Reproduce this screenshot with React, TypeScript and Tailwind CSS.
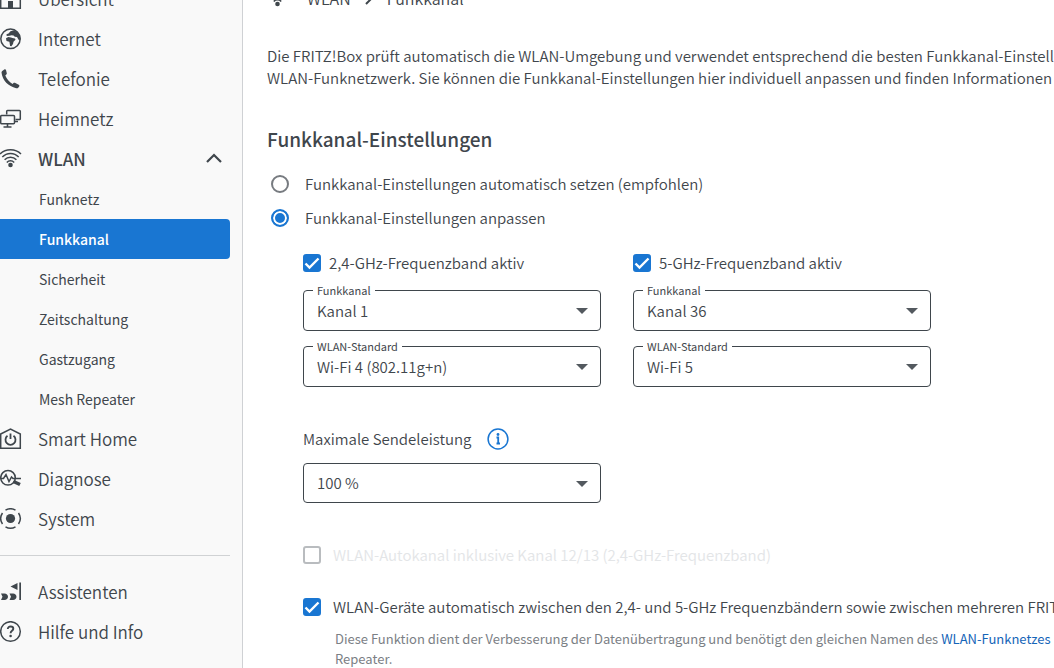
import { useState } from "react";
import type { ReactNode } from "react";
import clsx from "clsx";

export default function App() {
  const [mode, setMode] = useState("custom");

  return (
    <div className="flex h-screen overflow-hidden bg-white font-['Noto_Sans_CJK_SC','Noto_Sans',sans-serif] text-[15px] font-[350] text-[#3f464c]">
      <Sidebar />

      <main className="min-w-0 flex-1 overflow-hidden pl-6">
        {/* Breadcrumb */}
        <nav className="-mt-[22px] flex h-10 items-center text-base" aria-label="Pfad">
          <span className="flex w-10 shrink-0">
            <WlanIcon />
          </span>
          <a href="#wlan">WLAN</a>
          <svg className="mx-2 size-5" viewBox="0 0 20 20" fill="none" stroke="currentColor" strokeWidth="2">
            <path d="M7 4l6 6-6 6" />
          </svg>
          <span>Funkkanal</span>
        </nav>

        <p className="mt-[27px] leading-[22px] whitespace-nowrap">
          Die FRITZ!Box prüft automatisch die WLAN-Umgebung und verwendet entsprechend die besten Funkkanal-Einstellungen für Ihr
          <br />
          WLAN-Funknetzwerk. Sie können die Funkkanal-Einstellungen hier individuell anpassen und finden Informationen zur
        </p>

        <h1 className="mt-9 text-[19px] leading-7 font-medium">Funkkanal-Einstellungen</h1>

        {/* Mode selection */}
        <div className="mt-3.5 flex flex-col">
          <Radio
            label="Funkkanal-Einstellungen automatisch setzen (empfohlen)"
            checked={mode === "auto"}
            onChange={() => setMode("auto")}
          />
          <Radio
            label="Funkkanal-Einstellungen anpassen"
            checked={mode === "custom"}
            onChange={() => setMode("custom")}
          />
        </div>

        <div className="pl-9">
          {/* Frequency bands */}
          <div className="mt-4 flex gap-8">
            <Band
              id="band24"
              title="2,4-GHz-Frequenzband aktiv"
              channel="Kanal 1"
              standard="Wi-Fi 4 (802.11g+n)"
            />
            <Band id="band5" title="5-GHz-Frequenzband aktiv" channel="Kanal 36" standard="Wi-Fi 5" />
          </div>

          {/* Transmit power */}
          <div className="mt-10 flex h-6 items-center">
            <label htmlFor="power">Maximale Sendeleistung</label>
            <button type="button" aria-label="Information" className="ml-4 text-[#1976d2]">
              <InfoIcon />
            </button>
          </div>
          <div className="mt-3 w-[298px]">
            <SelectBox id="power" value="100 %" />
          </div>

          <div className="mt-10">
            <Checkbox wide disabled label="WLAN-Autokanal inklusive Kanal 12/13 (2,4-GHz-Frequenzband)" />
          </div>
          <div className="mt-7">
            <Checkbox
              wide
              defaultChecked
              label="WLAN-Geräte automatisch zwischen den 2,4- und 5-GHz Frequenzbändern sowie zwischen mehreren FRITZ!Box"
            />
          </div>
          <p className="mt-2.5 pl-8 text-[13px] leading-5 font-normal whitespace-nowrap text-[#7b8085]">
            Diese Funktion dient der Verbesserung der Datenübertragung und benötigt den gleichen Namen des{" "}
            <a href="#funknetz" className="text-[#1565b8]">
              WLAN-Funknetzes
            </a>
            <br />
            Repeater.
          </p>
        </div>
      </main>
    </div>
  );
}

/* Sidebar */

const subItems = ["Funknetz", "Funkkanal", "Sicherheit", "Zeitschaltung", "Gastzugang", "Mesh Repeater"];

function Sidebar() {
  return (
    <aside className="w-[243px] shrink-0 border-r border-[#cfd1d4] bg-[#f9f9f9] pr-3">
      <nav className="-mt-[21px]" aria-label="Hauptmenü">
        <NavItem icon={<HomeIcon />} label="Übersicht" />
        <NavItem icon={<GlobeIcon />} label="Internet" />
        <NavItem icon={<PhoneIcon />} label="Telefonie" />
        <NavItem icon={<NetworkIcon />} label="Heimnetz" />
        <button type="button" aria-expanded="true" className="flex h-10 w-full items-center pr-2 text-[17px] leading-6 font-medium">
          <span className="w-[38px] shrink-0">
            <WlanIcon />
          </span>
          <span className="flex-1 text-left">WLAN</span>
          <svg className="h-4 w-4" viewBox="0 0 16 16" fill="none" stroke="currentColor" strokeWidth="2.2">
            <path d="M1 11l7-7 7 7" />
          </svg>
        </button>
        {subItems.map((item) => (
          <a
            key={item}
            href="#wlan"
            className={clsx(
              "flex h-10 items-center rounded-r pl-[39px] text-sm",
              item === "Funkkanal" ? "bg-[#1976d2] font-medium text-white" : "font-normal"
            )}
          >
            {item}
          </a>
        ))}
        <NavItem icon={<SmartHomeIcon />} label="Smart Home" />
        <NavItem icon={<DiagnoseIcon />} label="Diagnose" />
        <NavItem icon={<SystemIcon />} label="System" />
        <hr className="my-4 border-[#d0d2d4]" />
        <NavItem icon={<AssistantIcon />} label="Assistenten" />
        <NavItem icon={<HelpIcon />} label="Hilfe und Info" />
      </nav>
    </aside>
  );
}

function NavItem({ icon, label }: { icon: ReactNode; label: string }) {
  return (
    <a href="#menu" className="flex h-10 items-center text-[17px] leading-6">
      <span className="w-[38px] shrink-0">{icon}</span>
      {label}
    </a>
  );
}

/* Form controls */

function Radio({ label, checked, onChange }: { label: string; checked: boolean; onChange: () => void }) {
  return (
    <label className="flex h-[34px] items-center gap-4 pl-1">
      <input
        type="radio"
        name="mode"
        checked={checked}
        onChange={onChange}
        className="size-[18px] shrink-0 appearance-none rounded-full border-2 border-[#777b80] bg-white checked:border-[#1976d2] checked:bg-[#1976d2] checked:shadow-[inset_0_0_0_2px_white]"
      />
      {label}
    </label>
  );
}

function Checkbox({
  label,
  wide,
  disabled,
  defaultChecked,
}: {
  label: string;
  wide?: boolean;
  disabled?: boolean;
  defaultChecked?: boolean;
}) {
  return (
    <label className={clsx("flex h-6 items-center whitespace-nowrap", wide ? "gap-3" : "gap-2", disabled && "text-[#e3e5e7]")}>
      <span className="grid shrink-0">
        <input
          type="checkbox"
          disabled={disabled}
          defaultChecked={defaultChecked}
          className="peer col-start-1 row-start-1 size-[18px] appearance-none rounded-[3px] border-2 border-[#53595f] bg-white checked:border-[#1976d2] checked:bg-[#1976d2] disabled:border-[#b9bcbf]"
        />
        <svg
          className="pointer-events-none invisible col-start-1 row-start-1 size-[18px] peer-checked:visible"
          viewBox="0 0 18 18"
          fill="none"
          stroke="white"
          strokeWidth="2.4"
        >
          <path d="M2.5 9.5l4 4 9-9" />
        </svg>
      </span>
      {label}
    </label>
  );
}

function SelectBox({ id, label, value }: { id: string; label?: string; value: string }) {
  return (
    <div className="relative">
      {label && (
        <label htmlFor={id} className="absolute -top-2 left-2.5 bg-white px-1 text-[11px] leading-4 font-normal">
          {label}
        </label>
      )}
      <select
        id={id}
        defaultValue={value}
        className={clsx(
          "block w-full appearance-none rounded border border-[#3f464c] bg-transparent px-[13px] leading-6",
          label ? "h-[41px]" : "h-10"
        )}
      >
        <option>{value}</option>
      </select>
      <svg className="pointer-events-none absolute top-[18px] right-[13px] h-[6px] w-3" viewBox="0 0 12 6" fill="#53595f">
        <path d="M0 0h12L6 6z" />
      </svg>
    </div>
  );
}

function Band({ id, title, channel, standard }: { id: string; title: string; channel: string; standard: string }) {
  return (
    <section className="w-[298px] shrink-0">
      <Checkbox defaultChecked label={title} />
      <div className="mt-[15px] flex flex-col gap-[15px]">
        <SelectBox id={`${id}-channel`} label="Funkkanal" value={channel} />
        <SelectBox id={`${id}-standard`} label="WLAN-Standard" value={standard} />
      </div>
    </section>
  );
}

/* Icons, all on a 22px grid */

function Icon({ children }: { children: ReactNode }) {
  return (
    <svg className="size-[22px]" viewBox="0 0 22 22" fill="none" stroke="currentColor" strokeWidth="1.5">
      {children}
    </svg>
  );
}

function HomeIcon() {
  return (
    <Icon>
      <path d="M.7 7.5L10.5 1l9.8 6.5v12.800H.7z" />
      <path d="M8 13h5v7H8z" fill="currentColor" stroke="none" />
    </Icon>
  );
}

function GlobeIcon() {
  return (
    <Icon>
      <circle cx="10.5" cy="10.8" r="9.7" />
      <g fill="currentColor" stroke="none">
        <path d="M6.500 6.300L8.500 5.500 10.500 3.200 14 2.300l3.500 2L20 8l.3 4-1.800-.3-1.500-2.700-2.200-.2-1.300-1.300-2-.3-2 .5-2.800.2z" />
        <path d="M6 10.300l2.300-1.200 2.700.3 1.300.7 2.700.3.5 1.300-2 2-.5 2.200-1.600 2.400-1.300-.3-.7-4.300-2.900-.8z" />
      </g>
    </Icon>
  );
}

function PhoneIcon() {
  return (
    <Icon>
      <path
        d="M2.200 3L4.300 1.400c.8-.5 1.500-.1 1.700.6l.8 3.300c.1.600-.1 1-.5 1.300l-1 .8c1.400 3.500 3.900 6.400 7.200 8.500l1-.9c.4-.4.9-.5 1.400-.2l3.800 2c.7.400.9 1 .5 1.600l-1 1.300c-.5.600-1.200.7-2 .5C8.500 18.500 2.300 12.500 1.500 4.600c0-.7.2-1.200.7-1.600z"
        fill="currentColor"
        stroke="none"
      />
    </Icon>
  );
}

function NetworkIcon() {
  return (
    <Icon>
      <path d="M6.700 6.500V3.300c0-.5.300-.8.800-.8h12c.5 0 .8.300.8.800v7.400c0 .5-.3.800-.8.800h-4" />
      <rect x=".7" y="7.500" width="13.800" height="8.300" rx="1" />
      <path d="M15 13.500h3M7.500 16v2.500M3.500 19h8" strokeWidth="1.600" />
    </Icon>
  );
}

function WlanIcon() {
  return (
    <Icon>
      <path d="M0 6c5.500-5.700 15.500-5.700 21 0M2.300 9c4.500-4.800 11.900-4.800 16.400 0M4.600 11.800c3.300-3.500 8.500-3.500 11.800 0M6.800 14.400c2.100-2.300 5.300-2.300 7.400 0" />
      <circle cx="10.500" cy="17" r="2.300" fill="currentColor" stroke="none" />
    </Icon>
  );
}

function SmartHomeIcon() {
  return (
    <Icon>
      <path d="M.7 6L10.500 1l9.800 5v14.300H.7z" />
      <path d="M7.500 7.800a5 5 0 1 0 6 0M10.500 5.500v5.500" strokeWidth="1.800" />
    </Icon>
  );
}

function DiagnoseIcon() {
  return (
    <Icon>
      <circle cx="8" cy="9.800" r="7.300" />
      <path d="M1 10.500h2.500l2.500-4 3 7 2.500-4.500 1.500 1.500h8" />
      <path d="M13.500 13.500l6.500 3" strokeWidth="3.500" />
    </Icon>
  );
}

function SystemIcon() {
  return (
    <Icon>
      <circle cx="10.500" cy="10.500" r="4.600" fill="currentColor" stroke="none" />
      <path d="M5.500 2.200a9.800 9.800 0 0 1 10 0M5.500 18.800a9.800 9.800 0 0 0 10 0M2.500 5a9.800 9.800 0 0 0 0 11M18.500 5a9.800 9.800 0 0 1 0 11" />
    </Icon>
  );
}

function AssistantIcon() {
  return (
    <Icon>
      <g fill="currentColor" stroke="none">
        <path d="M19.300 1.500H21V19h-1.700zM17.500 2v7l-7-3.500z" />
        <path d="M1 12.500h3.500c2 0 3.500 1.500 3.500 3.200S6.500 19 4.500 19H1l1.500-3.200zM9.500 12.500H13c2 0 3.500 1.500 3.500 3.200S15 19 13 19H9.500l1.500-3.200z" />
      </g>
    </Icon>
  );
}

function HelpIcon() {
  return (
    <Icon>
      <circle cx="10.500" cy="10.500" r="9.800" />
      <path d="M7.800 8c0-1.600 1.200-2.500 2.800-2.500s2.700.9 2.700 2.300c0 2-2.700 2.100-2.700 4.400" strokeWidth="1.900" />
      <circle cx="10.600" cy="15" r="1.300" fill="currentColor" stroke="none" />
    </Icon>
  );
}

function InfoIcon() {
  return (
    <Icon>
      <circle cx="11" cy="11" r="9.900" />
      <path d="M9.500 9.500h1.700v6M9.500 15.500h3.500" strokeWidth="1.800" />
      <circle cx="11" cy="6.500" r="1.400" fill="currentColor" stroke="none" />
    </Icon>
  );
}
